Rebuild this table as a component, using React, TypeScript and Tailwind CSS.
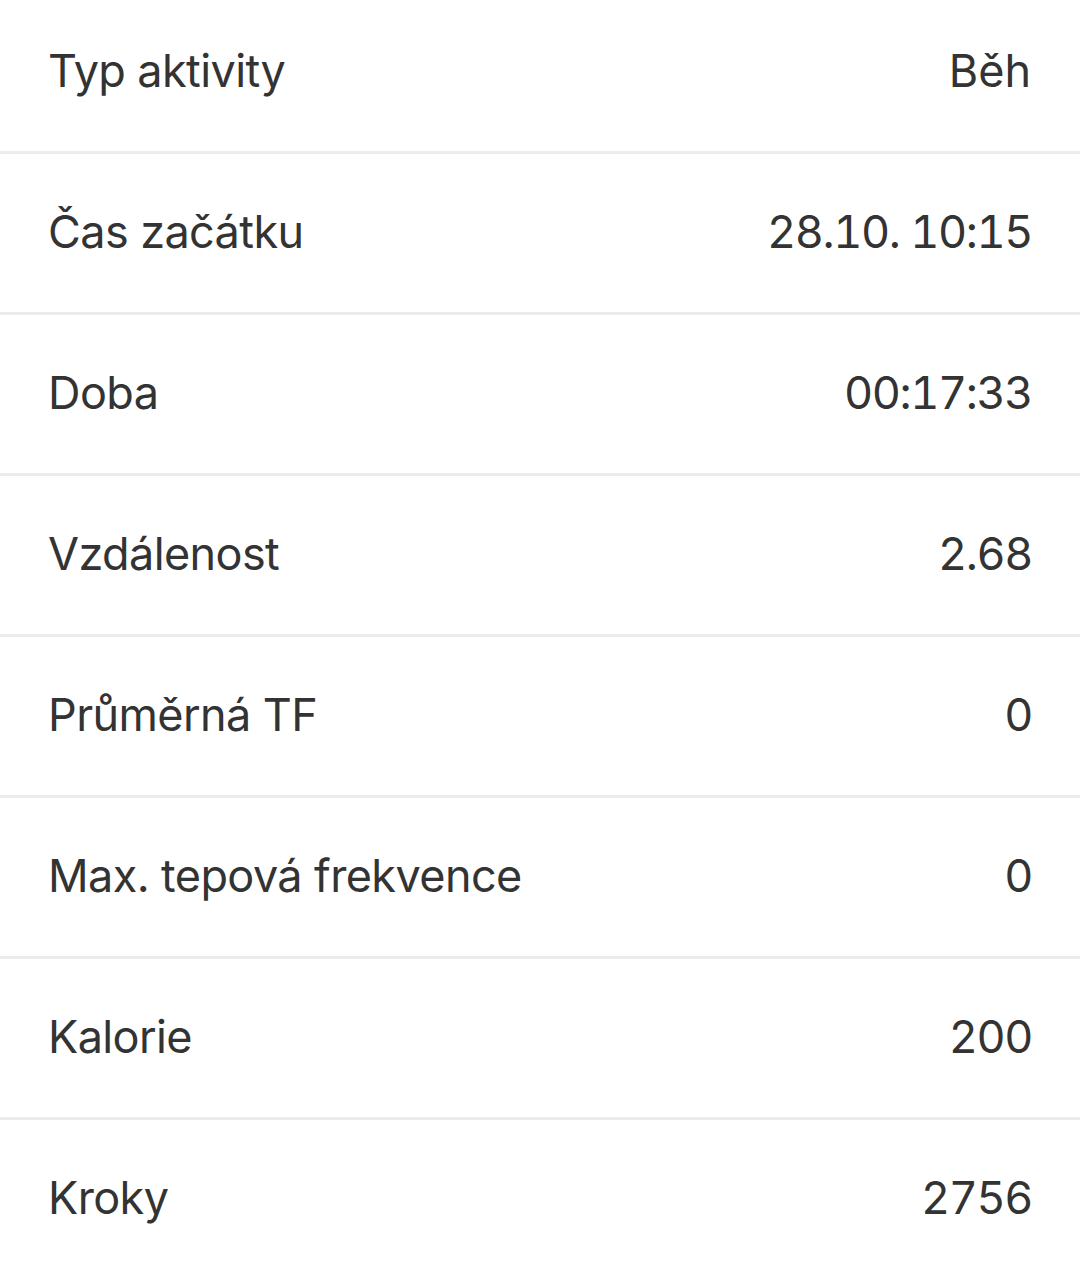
const rows: [string, string][] = [
  ["Typ aktivity", "Běh"],
  ["Čas začátku", "28.10. 10:15"],
  ["Doba", "00:17:33"],
  ["Vzdálenost", "2.68"],
  ["Průměrná TF", "0"],
  ["Max. tepová frekvence", "0"],
  ["Kalorie", "200"],
  ["Kroky", "2756"],
];

export default function App() {
  return (
    <div className="w-[1080px] h-[1278px] overflow-hidden bg-white font-['Inter',sans-serif] text-[#333333]">
      <div className="-mt-[7px]">
        {rows.map(([label, value], i) => (
          <div key={label}>
            {i > 0 && <div className="h-[3px] bg-[#ececec]" />}
            <div className="h-[158px] flex items-center justify-between pl-[48px] pr-[49px] pb-[4px] text-[45px] leading-none tracking-[-0.6px]">
              <span>{label}</span>
              {i === 0 ? (
                <span className="tracking-[0px]">{value}</span>
              ) : (
                <span className="tabular-nums tracking-[-1.4px] mr-[-1px]">{value}</span>
              )}
            </div>
          </div>
        ))}
      </div>
    </div>
  );
}
